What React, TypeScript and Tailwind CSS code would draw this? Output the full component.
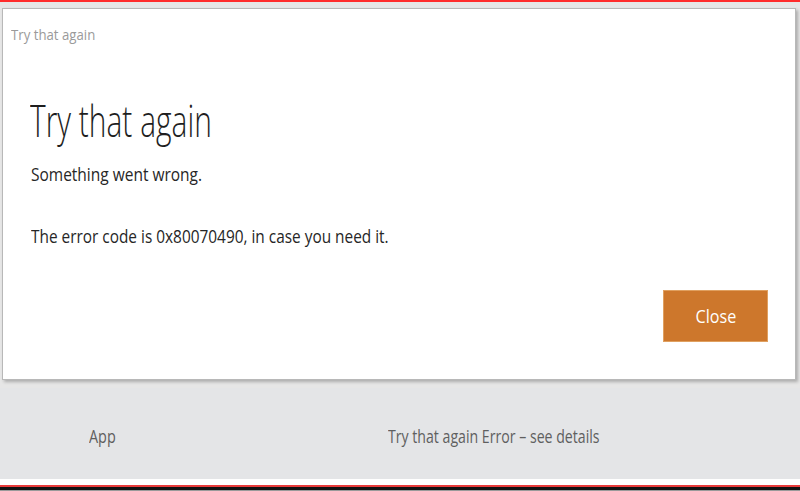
export default function App() {
  return (
    <div
      className="w-[800px] h-[491px] overflow-hidden bg-[#e6e6e6] flex flex-col"
      style={{ fontFamily: '"Open Sans", "Noto Sans", sans-serif' }}
    >
      <div className="h-[2px] bg-[#ff2b2b]" />
      <div className="pt-[6px] pl-[2px] pr-[4px]">
        <div className="relative h-[372px] bg-white border border-[#b8b8b8] shadow-[2px_2px_3px_rgba(0,0,0,0.25)] flex flex-col">
          <div className="pl-[8px] pt-[13px] h-[40px]">
            <span className="inline-block origin-left scale-x-[0.88] text-[15px] leading-[20px] text-[#9a9a9a]">
              Try that again
            </span>
          </div>
          <div className="pl-[27px] pt-[45px]">
            <h1 className="inline-block origin-left scale-x-[0.68] text-[44px] leading-[52px] font-light text-[#1e1e1e]">
              Try that again
            </h1>
          </div>
          <p className="pl-[28px] mt-[15px]">
            <span className="inline-block origin-left scale-x-[0.815] text-[19px] leading-[26px] text-[#262626]">
              Something went wrong.
            </span>
          </p>
          <p className="pl-[28px] mt-[36px]">
            <span className="inline-block origin-left scale-x-[0.81] text-[19px] leading-[26px] text-[#262626]">
              The error code is 0x80070490, in case you need it.
            </span>
          </p>
          <div className="flex-1 flex items-end justify-end pr-[27px] pb-[37px]">
            <button className="w-[105px] h-[52px] bg-[#cd772c] border border-[#e0a060] text-white text-[19px] font-medium flex items-center justify-center">
              <span className="inline-block scale-x-[0.85]">Close</span>
            </button>
          </div>
        </div>
      </div>
      <div className="mt-[8px] h-[91px] bg-[#e4e5e7] flex items-center pt-[6px] text-[#5f5f5f] text-[18px]">
        <span className="inline-block origin-left scale-x-[0.8] ml-[89px] w-[60px]">App</span>
        <span className="inline-block origin-left scale-x-[0.785] ml-[239px]">
          Try that again Error – see details
        </span>
      </div>
      <div className="h-[6px] bg-white" />
      <div className="h-[2px] bg-[#e83a3a]" />
      <div className="h-[3px] bg-[#111111]" />
      <div className="flex-1 bg-[#9a9a9a]" />
    </div>
  );
}
